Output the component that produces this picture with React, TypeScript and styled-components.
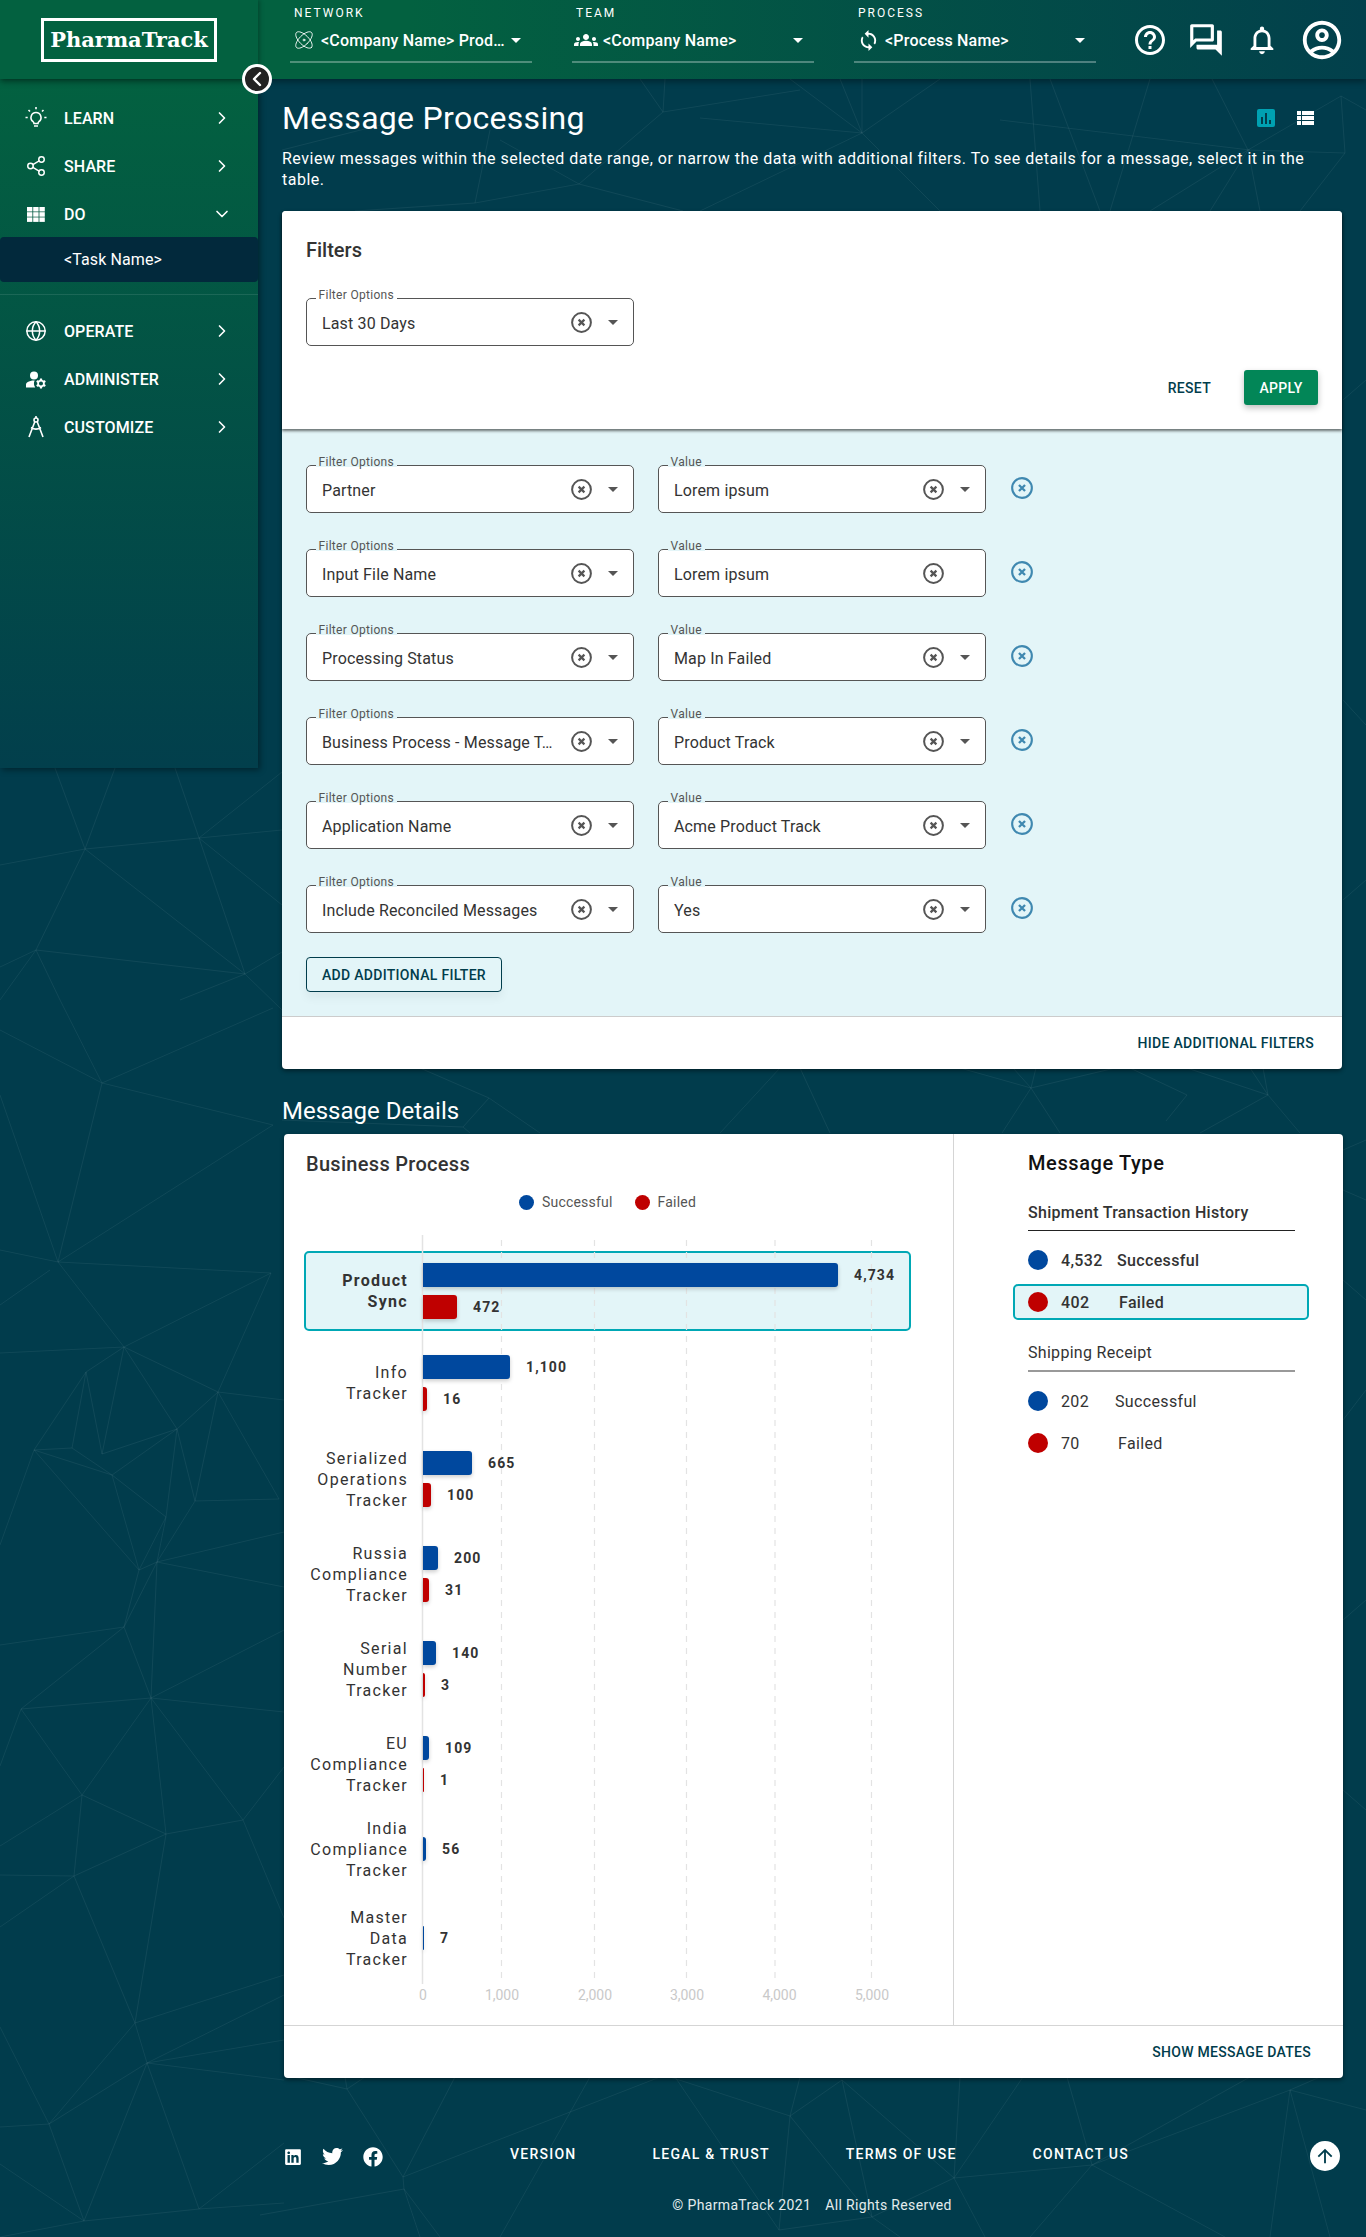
import React from 'react';
import styled, { createGlobalStyle } from 'styled-components';
import { ChevronDown, ChevronLeft, ChevronRight, Globe, Share2, Atom } from 'lucide-react';
import {
  MdArrowUpward,
  MdGroups,
  MdHelpOutline,
  MdManageAccounts,
  MdNotificationsNone,
  MdOutlineAccountCircle,
  MdOutlineForum,
  MdSync,
} from 'react-icons/md';
import { FaFacebook, FaLinkedin, FaTwitter } from 'react-icons/fa';

const colors = {
  page: '#013c4c',
  green: '#036140',
  teal: '#013d4c',
  cyan: '#00a8b5',
  tint: '#e3f5f8',
  blue: '#00489e',
  red: '#bf0000',
  text: '#333333',
  control: '#555555',
};

const GlobalStyle = createGlobalStyle`
  * {
    box-sizing: border-box;
  }

  body {
    margin: 0;
    background: ${colors.page};
    font-family: Roboto, "Liberation Sans", sans-serif;
    color: ${colors.text};
  }
`;

const Page = styled.div`
  position: relative;
  width: 1366px;
  min-height: 2237px;
  overflow: hidden;
  background: ${colors.page};
`;

const MeshSvg = styled.svg`
  position: absolute;
  top: 0;
  left: 0;
`;

/* ---------- header ---------- */

const Header = styled.header`
  position: relative;
  z-index: 3;
  display: flex;
  height: 79px;
  background: linear-gradient(90deg, ${colors.green} 0%, ${colors.green} 30%, #02404c 100%);
  box-shadow: 0 3px 6px rgba(0, 0, 0, 0.35);
  color: #ffffff;
`;

const LogoArea = styled.div`
  position: relative;
  display: flex;
  align-items: center;
  justify-content: center;
  width: 258px;
  flex-shrink: 0;
  background: ${colors.green};
  box-shadow: 2px 0 4px rgba(0, 0, 0, 0.25);
`;

const Logo = styled.div`
  display: flex;
  align-items: center;
  justify-content: center;
  width: 176px;
  height: 44px;
  border: 3px solid #ffffff;
  font-family: "DejaVu Serif", "Liberation Serif", serif;
  font-size: 21px;
  font-weight: 700;
`;

const CollapseButton = styled.button`
  position: absolute;
  top: 64px;
  left: 242px;
  z-index: 4;
  display: flex;
  align-items: center;
  justify-content: center;
  width: 30px;
  height: 30px;
  padding: 0;
  border: 3px solid #ffffff;
  border-radius: 50%;
  background: #222222;
  color: #ffffff;
`;

const Pickers = styled.div`
  display: flex;
  gap: 40px;
  margin-left: 32px;
`;

const Picker = styled.div`
  width: 242px;
  padding-top: 5px;
`;

const PickerLabel = styled.div`
  height: 16px;
  padding-left: 4px;
  font-size: 12px;
  line-height: 16px;
  letter-spacing: 2px;
`;

const PickerRow = styled.div`
  display: flex;
  align-items: center;
  height: 42px;
  padding: 0 11px 2px 2px;
  border-bottom: 2px solid rgba(255, 255, 255, 0.3);
`;

const PickerIcon = styled.span`
  display: flex;
  align-items: center;
  justify-content: center;
  width: 24px;
  margin-right: 5px;
`;

const PickerText = styled.span`
  flex: 1;
  padding-top: 1px;
  font-size: 16px;
  font-weight: 500;
  letter-spacing: 0.2px;
  white-space: nowrap;
`;

const Caret = styled.span<{ $color?: string; $hidden?: boolean }>`
  width: 0;
  height: 0;
  flex-shrink: 0;
  border-left: 5px solid transparent;
  border-right: 5px solid transparent;
  border-top: 5px solid ${({ $color }) => $color ?? colors.control};
  visibility: ${({ $hidden }) => ($hidden ? 'hidden' : 'visible')};
`;

const HeaderIcons = styled.div`
  display: flex;
  align-items: center;
  margin-left: auto;
  padding-right: 12px;
`;

const HeaderIcon = styled.span<{ $wide?: boolean }>`
  display: flex;
  align-items: center;
  justify-content: center;
  width: ${({ $wide }) => ($wide ? '64px' : '56px')};
`;

/* ---------- sidebar ---------- */

const Body = styled.div`
  position: relative;
  z-index: 1;
  display: flex;
  align-items: flex-start;
`;

const Sidebar = styled.nav`
  width: 258px;
  height: 689px;
  flex-shrink: 0;
  padding-top: 15px;
  background: linear-gradient(180deg, ${colors.green} 0%, #023f4c 100%);
  box-shadow: 2px 2px 6px rgba(0, 0, 0, 0.4);
  color: #ffffff;
`;

const NavItem = styled.div`
  display: flex;
  align-items: center;
  height: 48px;
  padding: 0 26px 0 24px;
  font-size: 16px;
  font-weight: 500;
  letter-spacing: 0.1px;
`;

const NavIcon = styled.span`
  display: flex;
  align-items: center;
  justify-content: center;
  width: 24px;
  margin-right: 16px;
`;

const NavLabel = styled.span`
  flex: 1;
`;

const NavChild = styled.div`
  display: flex;
  align-items: center;
  height: 45px;
  margin-top: -1px;
  padding-left: 64px;
  border-radius: 4px;
  background: #02293c;
  font-size: 16px;
  letter-spacing: 0.1px;
`;

const NavDivider = styled.div`
  height: 1px;
  margin: 12px 0;
  background: rgba(255, 255, 255, 0.1);
`;

/* ---------- main ---------- */

const Main = styled.main`
  width: 1108px;
  padding: 19px 24px 0;
  color: ${colors.text};
`;

const TitleRow = styled.div`
  display: flex;
  align-items: center;
  justify-content: space-between;
  height: 40px;
  padding-right: 28px;
`;

const PageTitle = styled.h1`
  margin: 0;
  font-size: 32px;
  font-weight: 400;
  line-height: 40px;
  letter-spacing: 0.3px;
  color: #ffffff;
`;

const ViewToggles = styled.div`
  display: flex;
  align-items: center;
  gap: 22px;
`;

const ChartToggle = styled.span`
  display: flex;
  align-items: flex-end;
  justify-content: center;
  gap: 2px;
  width: 18px;
  height: 18px;
  padding-bottom: 3px;
  border-radius: 2px;
  background: #00a1b2;
`;

const ChartToggleBar = styled.span<{ $height: number }>`
  width: 2px;
  height: ${({ $height }) => $height}px;
  background: ${colors.teal};
`;

const ListToggle = styled.span`
  display: grid;
  grid-template-columns: 4px 12px;
  grid-auto-rows: 4px;
  gap: 1px;
`;

const ListToggleCell = styled.span`
  background: #ffffff;
`;

const Description = styled.p`
  margin: 10px 0 21px;
  font-size: 16px;
  line-height: 21px;
  letter-spacing: 0.5px;
  color: #ffffff;
`;

const Card = styled.section<{ $offset?: number; $bleed?: number }>`
  margin-left: ${({ $offset }) => $offset ?? 0}px;
  margin-right: ${({ $bleed }) => $bleed ?? 0}px;
  border-radius: 4px;
  background: #ffffff;
  box-shadow: 0 2px 4px rgba(0, 0, 0, 0.45);
`;

const FilterTop = styled.div`
  position: relative;
  z-index: 1;
  padding: 27px 24px 24px 24px;
  border-radius: 4px 4px 0 0;
  background: #ffffff;
  box-shadow: 0 2px 3px rgba(0, 0, 0, 0.55);
`;

const CardTitle = styled.h2<{ $inset?: number; $spacing?: number }>`
  margin: 0 0 0 ${({ $inset }) => $inset ?? 0}px;
  font-size: 20px;
  font-weight: 500;
  line-height: 24px;
  letter-spacing: ${({ $spacing }) => $spacing ?? 0}px;
  color: ${colors.text};
`;

const Actions = styled.div`
  display: flex;
  align-items: center;
  justify-content: flex-end;
  gap: 33px;
  margin-top: 24px;
`;

const TextButton = styled.button`
  padding: 0;
  border: 0;
  background: none;
  font-family: inherit;
  font-size: 14px;
  font-weight: 500;
  letter-spacing: 0.3px;
  color: ${colors.teal};
`;

const ApplyButton = styled.button`
  width: 74px;
  height: 35px;
  padding: 0;
  border: 0;
  border-radius: 3px;
  background: #028657;
  box-shadow: 0 3px 6px rgba(0, 0, 0, 0.25);
  font-family: inherit;
  font-size: 14px;
  font-weight: 500;
  letter-spacing: 0.3px;
  color: #ffffff;
`;

const FilterList = styled.div`
  padding: 36px 24px 24px;
  border-bottom: 1px solid #cccccc;
  background: ${colors.tint};
`;

const FilterRow = styled.div`
  display: flex;
  align-items: center;
  gap: 24px;
  margin-bottom: 36px;
`;

const SelectBox = styled.div<{ $top?: number }>`
  position: relative;
  display: flex;
  align-items: center;
  gap: 16px;
  width: 328px;
  height: 48px;
  margin-top: ${({ $top }) => $top ?? 0}px;
  padding: 0 15px;
  border: 1.5px solid ${colors.control};
  border-radius: 5px;
  background: #ffffff;
`;

const SelectLabel = styled.label<{ $bg: string }>`
  position: absolute;
  top: -12.5px;
  left: 8.5px;
  padding: 0 3px;
  background: linear-gradient(180deg, ${({ $bg }) => $bg} 0 13px, #ffffff00 13px);
  font-size: 12px;
  line-height: 16px;
  letter-spacing: 0.3px;
  color: ${colors.control};
`;

const SelectValue = styled.span`
  flex: 1;
  padding-top: 3px;
  font-size: 16px;
  letter-spacing: 0.15px;
  white-space: nowrap;
  color: ${colors.text};
`;

const ClearSvg = styled.svg`
  flex-shrink: 0;
`;

const RemoveButton = styled.span`
  display: flex;
  margin-left: 1px;
  margin-top: -2px;
`;

const AddButton = styled.button`
  display: block;
  width: 196px;
  height: 35px;
  margin-top: -12px;
  padding: 0;
  border: 1.5px solid ${colors.teal};
  border-radius: 4px;
  background: transparent;
  box-shadow: 0 6px 10px rgba(0, 0, 0, 0.05);
  font-family: inherit;
  font-size: 14px;
  font-weight: 500;
  letter-spacing: 0.3px;
  color: ${colors.teal};
`;

const CardFooter = styled.div<{ $pad: number }>`
  display: flex;
  align-items: center;
  justify-content: flex-end;
  height: 52px;
  padding-right: ${({ $pad }) => $pad}px;
`;

const SectionTitle = styled.h2`
  margin: 26px 0 7px;
  font-size: 24px;
  font-weight: 400;
  line-height: 32px;
  color: #ffffff;
`;

const DetailsGrid = styled.div`
  display: grid;
  grid-template-columns: 669px 1fr;
  height: 892px;
  border-bottom: 1px solid #d5d5d5;
`;

const ChartPanel = styled.div`
  padding-top: 18px;
`;

const Legend = styled.div`
  display: flex;
  align-items: center;
  justify-content: center;
  gap: 22px;
  width: 607px;
  height: 20px;
  margin: 16px 0 23px 20px;
  font-size: 14px;
  letter-spacing: 0.2px;
  color: ${colors.control};
`;

const LegendItem = styled.span`
  display: flex;
  align-items: center;
  gap: 8px;
`;

const Dot = styled.span<{ $color: string; $size: number }>`
  width: ${({ $size }) => $size}px;
  height: ${({ $size }) => $size}px;
  flex-shrink: 0;
  border-radius: 50%;
  background: ${({ $color }) => $color};
`;

const Chart = styled.div`
  position: relative;
  width: 607px;
  margin-left: 20px;
  padding: 16px 0 14px;
`;

const GridSvg = styled.svg`
  position: absolute;
  top: 0;
  left: 0;
  z-index: 1;
`;

const ChartRow = styled.div<{ $top: number; $selected?: boolean }>`
  display: flex;
  align-items: center;
  height: ${({ $selected }) => ($selected ? 80 : 64)}px;
  margin-top: ${({ $top }) => $top}px;
  border: 2px solid ${({ $selected }) => ($selected ? colors.cyan : 'transparent')};
  border-radius: 5px;
  background: ${({ $selected }) => ($selected ? colors.tint : 'transparent')};
`;

const RowLabel = styled.div<{ $selected?: boolean }>`
  width: 102px;
  margin-right: 15px;
  flex-shrink: 0;
  text-align: right;
  white-space: pre-line;
  font-size: 16px;
  font-weight: ${({ $selected }) => ($selected ? 700 : 400)};
  line-height: 21px;
  letter-spacing: 1.3px;
  color: ${colors.text};
`;

const Bars = styled.div`
  position: relative;
  z-index: 2;
  display: flex;
  flex-direction: column;
  gap: 8px;
`;

const BarLine = styled.div`
  display: flex;
  align-items: center;
  gap: 16px;
  height: 24px;
`;

const Bar = styled.span<{ $color: string; $width: number }>`
  display: block;
  width: ${({ $width }) => $width}px;
  height: 24px;
  border-radius: 0 3px 3px 0;
  background: ${({ $color }) => $color};
  box-shadow: 0 2px 4px rgba(0, 0, 0, 0.2);
`;

const BarValue = styled.span`
  font-size: 14px;
  font-weight: 700;
  letter-spacing: 1.1px;
  color: ${colors.text};
`;

const TickRow = styled.div`
  position: relative;
  width: 607px;
  height: 22px;
  margin-left: 20px;
`;

const Tick = styled.span<{ $left: number }>`
  position: absolute;
  left: ${({ $left }) => $left}px;
  top: 0;
  transform: translateX(-50%);
  font-size: 14px;
  line-height: 22px;
  color: #c9c9c9;
`;

const TypePanel = styled.div`
  padding: 17px 0 0 74px;
  border-left: 1px solid #d5d5d5;
`;

const TypeTitle = styled.h2`
  margin: 0 0 28px;
  font-size: 20px;
  font-weight: 500;
  line-height: 24px;
  letter-spacing: 0.6px;
  color: #111111;
`;

const GroupTitle = styled.div<{ $active?: boolean; $top: number }>`
  width: 267px;
  margin-top: ${({ $top }) => $top}px;
  padding-bottom: 7px;
  border-bottom: ${({ $active }) => ($active ? '1px solid #222222' : '2px solid #999999')};
  font-size: 16px;
  font-weight: ${({ $active }) => ($active ? 500 : 400)};
  line-height: 20px;
  letter-spacing: 0.3px;
`;

const TypeRow = styled.div<{ $selected?: boolean; $top: number; $bold?: boolean }>`
  display: flex;
  align-items: center;
  width: 296px;
  height: 36px;
  margin: ${({ $top }) => $top}px 0 0 -15px;
  padding-left: 13px;
  border: 2px solid ${({ $selected }) => ($selected ? colors.cyan : 'transparent')};
  border-radius: 5px;
  background: ${({ $selected }) => ($selected ? colors.tint : 'transparent')};
  font-size: 16px;
  font-weight: ${({ $bold }) => ($bold ? 500 : 400)};
  letter-spacing: 0.35px;
`;

const TypeValue = styled.span<{ $width: number }>`
  width: ${({ $width }) => $width}px;
  margin-left: 13px;
`;

/* ---------- footer ---------- */

const Footer = styled.footer`
  color: #ffffff;
`;

const FooterRow = styled.div`
  display: flex;
  align-items: center;
  height: 30px;
  margin: 63px 0 0 2px;
  padding-right: 2px;
`;

const Socials = styled.div`
  display: flex;
  align-items: center;
  gap: 20px;
  width: 226px;
  padding-top: 1px;
`;

const FooterLinks = styled.div`
  display: flex;
  gap: 76px;
  padding-bottom: 4px;
  font-size: 14px;
  font-weight: 500;
  letter-spacing: 1.25px;
`;

const BackToTop = styled.span`
  display: flex;
  align-items: center;
  justify-content: center;
  width: 30px;
  height: 30px;
  margin-left: auto;
  border-radius: 50%;
  background: #ffffff;
  color: ${colors.teal};
`;

const Copyright = styled.div`
  display: flex;
  justify-content: center;
  gap: 14px;
  margin-top: 24px;
  font-size: 14px;
  line-height: 20px;
  letter-spacing: 0.35px;
  color: #e3ecee;
`;

/* ---------- drawings ---------- */

const CircleX = ({ color, size = 21 }: { color: string; size?: number }) => (
  <ClearSvg width={size} height={size} viewBox="0 0 21 21" fill="none">
    <circle cx="10.5" cy="10.5" r="9.4" stroke={color} strokeWidth="2" />
    <path d="M7.6 7.6l5.8 5.8M13.4 7.6l-5.8 5.8" stroke={color} strokeWidth="2.2" />
  </ClearSvg>
);

const BulbIcon = () => (
  <svg width="24" height="24" viewBox="0 0 24 24" fill="none" stroke="#fff" strokeWidth="1.6">
    <path d="M12 6.5a5 5 0 0 0-3 9c.7.6 1 1.2 1 2h4c0-.8.3-1.4 1-2a5 5 0 0 0-3-9z" />
    <path d="M10 20h4M12 1v2.2M4.5 4l1.5 1.5M19.5 4 18 5.500M1.500 11.500h2.200M20.300 11.500h2.200" />
  </svg>
);

const GridIcon = () => (
  <svg width="18" height="15" viewBox="0 0 18 15" fill="#fff">
    {[0, 6.2, 12.4].map((x) =>
      [0, 5.2, 10.4].map((y) => <rect key={`${x}-${y}`} x={x} y={y} width="5.400" height="4.500" />),
    )}
  </svg>
);

const CompassIcon = () => (
  <svg width="24" height="24" viewBox="0 0 24 24" fill="none" stroke="#fff" strokeWidth="1.6">
    <circle cx="12" cy="5" r="2" />
    <path d="M12 1v2M10.800 6.800 5 22M13.200 6.800 19 22M7 12.500c3 2 7 2 10 0" />
  </svg>
);

const meshLines: number[][] = [
  // left column
  [0, 1030, 102, 1083], [60, 1000, 102, 1083], [102, 1083, 273, 1008], [102, 1083, 273, 1125], [102, 1083, 58, 1262],
  [0, 1095, 58, 1262], [58, 1262, 273, 1125], [58, 1262, 271, 1273], [0, 1250, 58, 1262], [0, 1305, 50, 1270],
  [58, 1262, 124, 1347], [0, 1353, 124, 1347], [124, 1347, 271, 1273], [124, 1347, 218, 1392], [124, 1347, 86, 1372],
  [124, 1347, 177, 1429], [124, 1347, 102, 1454], [218, 1392, 284, 1400], [218, 1392, 177, 1429], [218, 1392, 195, 1501],
  [218, 1392, 279, 1499], [218, 1392, 271, 1273], [86, 1372, 34, 1450], [86, 1372, 72, 1448], [86, 1372, 102, 1454],
  [34, 1450, 72, 1448], [72, 1448, 112, 1475], [34, 1450, 112, 1475], [102, 1454, 177, 1429], [112, 1475, 177, 1429],
  [34, 1450, 0, 1545], [34, 1450, 139, 1570], [112, 1475, 166, 1517], [112, 1475, 139, 1570], [177, 1429, 166, 1517],
  [177, 1429, 195, 1501], [195, 1501, 279, 1499], [166, 1517, 139, 1570], [166, 1517, 157, 1562], [195, 1501, 157, 1562],
  [139, 1570, 157, 1562], [139, 1570, 124, 1627], [157, 1562, 124, 1627], [157, 1562, 284, 1532], [157, 1562, 284, 1587],
  [157, 1562, 151, 1698], [124, 1627, 151, 1698], [124, 1627, 0, 1645], [124, 1627, 21, 1709], [151, 1698, 21, 1709],
  [151, 1698, 284, 1712], [151, 1698, 284, 1630], [151, 1698, 82, 1795], [21, 1709, 82, 1795], [21, 1709, 0, 1766],
  [151, 1698, 166, 1834], [151, 1698, 243, 1820], [82, 1795, 166, 1834], [82, 1795, 74, 1876], [82, 1795, 0, 1846],
  [74, 1876, 166, 1834], [74, 1876, 0, 1875], [74, 1876, 0, 1927], [166, 1834, 243, 1820], [243, 1820, 284, 1767],
  [243, 1820, 284, 1918], [166, 1834, 135, 2023], [74, 1876, 135, 2023], [135, 2023, 284, 1975], [135, 2023, 147, 2063],
  [135, 2023, 49, 2124], [147, 2063, 49, 2124], [147, 2063, 284, 2040], [147, 2063, 284, 2080], [147, 2063, 284, 1995],
  [147, 2063, 84, 2221], [147, 2063, 199, 2209], [49, 2124, 84, 2221], [49, 2124, 0, 2127], [49, 2124, 0, 2027],
  [84, 2221, 199, 2209], [84, 2221, 0, 2237], [199, 2209, 284, 2203], [199, 2209, 284, 2143], [84, 2221, 0, 2164],
  // below the sidebar
  [85, 849, 55, 768], [85, 849, 115, 768], [85, 849, 0, 865], [85, 849, 199, 838], [199, 838, 175, 768],
  [199, 838, 282, 772], [199, 838, 282, 830], [85, 849, 36, 950], [85, 849, 245, 974], [199, 838, 245, 974],
  [199, 838, 282, 905], [36, 950, 245, 974], [36, 950, 0, 967], [245, 974, 282, 952], [245, 974, 282, 1010],
  [36, 950, 0, 1000], [36, 950, 60, 1000], [245, 974, 180, 1000],
  // top strip
  [579, 184, 475, 203], [475, 203, 490, 130], [475, 203, 355, 211], [579, 184, 683, 211], [579, 184, 500, 140],
  [663, 112, 665, 79], [663, 112, 640, 79], [663, 112, 579, 184], [663, 112, 800, 90], [282, 150, 400, 120],
  [862, 133, 790, 79], [862, 133, 840, 79], [862, 133, 862, 79], [862, 133, 940, 79], [862, 133, 700, 118],
  [862, 133, 940, 211], [862, 133, 700, 211], [1248, 150, 1341, 96], [1248, 150, 1345, 153], [1248, 150, 1212, 79],
  [1248, 150, 1150, 211], [1248, 150, 1260, 211], [1248, 150, 1210, 211], [1341, 96, 1366, 110], [1341, 96, 1345, 153],
  [1345, 153, 1300, 211], [1050, 79, 1100, 211], [1030, 79, 1040, 211], [1150, 79, 1110, 211], [1000, 120, 1250, 150],
  // between the cards
  [1031, 1088, 960, 1068], [1031, 1088, 1013, 1068], [1031, 1088, 1036, 1068], [1031, 1088, 1115, 1068], [1031, 1088, 1002, 1133],
  [1031, 1088, 1060, 1133], [1268, 1095, 1187, 1068], [1268, 1095, 1250, 1068], [1268, 1095, 1263, 1068], [1268, 1095, 1200, 1133],
  [1268, 1095, 1300, 1133], [1187, 1095, 1130, 1068], [1187, 1095, 1166, 1121], [489, 1098, 420, 1068], [489, 1098, 463, 1127],
  [489, 1098, 540, 1133], [463, 1127, 282, 1120], [463, 1127, 470, 1133], [780, 1068, 720, 1133], [800, 1068, 830, 1133],
  // footer
  [347, 2089, 284, 2075], [347, 2089, 345, 2077], [347, 2089, 365, 2077], [347, 2089, 403, 2177], [403, 2177, 404, 2189],
  [404, 2189, 260, 2215], [404, 2189, 440, 2237], [404, 2189, 420, 2237], [403, 2177, 660, 2077], [403, 2177, 455, 2077],
  [790, 2116, 670, 2077], [790, 2116, 842, 2080], [790, 2116, 800, 2077], [790, 2116, 872, 2217], [790, 2116, 779, 2230],
  [842, 2080, 954, 2178], [842, 2080, 872, 2217], [675, 2077, 779, 2230], [954, 2178, 1092, 2165], [954, 2178, 872, 2217],
  [954, 2178, 960, 2077], [954, 2178, 1023, 2077], [779, 2230, 872, 2217], [872, 2217, 900, 2237], [954, 2178, 985, 2237],
  [1092, 2165, 1290, 2090], [1092, 2165, 1067, 2077], [1092, 2165, 1225, 2237], [1092, 2165, 1030, 2237], [1290, 2090, 1366, 2110],
  [1290, 2090, 1270, 2237], [1290, 2090, 1330, 2237], [1290, 2090, 1320, 2077], [1092, 2165, 1250, 2077], [500, 2237, 590, 2077],
  [1366, 1140, 1343, 1150], [1343, 1190, 1366, 1200], [1343, 1280, 1366, 1300], [1343, 1420, 1366, 1390],
  [1343, 1620, 1366, 1600], [1343, 1790, 1366, 1810], [1343, 400, 1366, 380], [1343, 700, 1366, 725], [1343, 900, 1366, 880],
];

const Mesh = () => (
  <MeshSvg width="1366" height="2237" viewBox="0 0 1366 2237" stroke="#8fb0ba" strokeOpacity="0.14" strokeWidth="0.8">
    {meshLines.map(([x1, y1, x2, y2]) => (
      <line key={`${x1}-${y1}-${x2}-${y2}`} x1={x1} y1={y1} x2={x2} y2={y2} />
    ))}
  </MeshSvg>
);

/* ---------- data ---------- */

const filters = [
  { option: 'Partner', value: 'Lorem ipsum', caret: true },
  { option: 'Input File Name', value: 'Lorem ipsum', caret: false },
  { option: 'Processing Status', value: 'Map In Failed', caret: true },
  { option: 'Business Process - Message T…', value: 'Product Track', caret: true },
  { option: 'Application Name', value: 'Acme Product Track', caret: true },
  { option: 'Include Reconciled Messages', value: 'Yes', caret: true },
];

type ChartItem = {
  label: string;
  top: number;
  ok: [number, string];
  failed?: [number, string];
  selected?: boolean;
};

const chartItems: ChartItem[] = [
  { label: 'Product\nSync', top: 0, ok: [415, '4,734'], failed: [34, '472'], selected: true },
  { label: 'Info\nTracker', top: 20, ok: [87, '1,100'], failed: [4, '16'] },
  { label: 'Serialized\nOperations\nTracker', top: 32, ok: [49, '665'], failed: [8, '100'] },
  { label: 'Russia\nCompliance\nTracker', top: 31, ok: [15, '200'], failed: [6, '31'] },
  { label: 'Serial\nNumber\nTracker', top: 31, ok: [13, '140'], failed: [2, '3'] },
  { label: 'EU\nCompliance\nTracker', top: 31, ok: [6, '109'], failed: [1, '1'] },
  { label: 'India\nCompliance\nTracker', top: 21, ok: [3, '56'] },
  { label: 'Master\nData\nTracker', top: 25, ok: [1, '7'] },
];

const gridLines = [197.5, 290.5, 382.5, 471, 567.5];
const ticks: [number, string][] = [
  [119, '0'],
  [198, '1,000'],
  [291, '2,000'],
  [383, '3,000'],
  [475.5, '4,000'],
  [568, '5,000'],
];

const Select = ({ label, value, bg, caret = true }: { label: string; value: string; bg: string; caret?: boolean }) => (
  <SelectBox>
    <SelectLabel $bg={bg}>{label}</SelectLabel>
    <SelectValue>{value}</SelectValue>
    <CircleX color={colors.control} />
    <Caret $hidden={!caret} />
  </SelectBox>
);

const App = () => (
  <Page>
    <GlobalStyle />
    <Mesh />
    <Header>
      <LogoArea>
        <Logo>PharmaTrack</Logo>
        <CollapseButton type="button" aria-label="Collapse menu">
          <ChevronLeft size={24} strokeWidth={2.4} />
        </CollapseButton>
      </LogoArea>
      <Pickers>
        <Picker>
          <PickerLabel>NETWORK</PickerLabel>
          <PickerRow>
            <PickerIcon>
              <Atom size={22} strokeWidth={1} />
            </PickerIcon>
            <PickerText>{'<Company Name> Prod…'}</PickerText>
            <Caret $color="#ffffff" />
          </PickerRow>
        </Picker>
        <Picker>
          <PickerLabel>TEAM</PickerLabel>
          <PickerRow>
            <PickerIcon>
              <MdGroups size={24} />
            </PickerIcon>
            <PickerText>{'<Company Name>'}</PickerText>
            <Caret $color="#ffffff" />
          </PickerRow>
        </Picker>
        <Picker>
          <PickerLabel>PROCESS</PickerLabel>
          <PickerRow>
            <PickerIcon>
              <MdSync size={23} />
            </PickerIcon>
            <PickerText>{'<Process Name>'}</PickerText>
            <Caret $color="#ffffff" />
          </PickerRow>
        </Picker>
      </Pickers>
      <HeaderIcons>
        <HeaderIcon>
          <MdHelpOutline size={36} />
        </HeaderIcon>
        <HeaderIcon>
          <MdOutlineForum size={38} />
        </HeaderIcon>
        <HeaderIcon>
          <MdNotificationsNone size={34} />
        </HeaderIcon>
        <HeaderIcon $wide>
          <MdOutlineAccountCircle size={46} />
        </HeaderIcon>
      </HeaderIcons>
    </Header>

    <Body>
      <Sidebar>
        <NavItem>
          <NavIcon><BulbIcon /></NavIcon>
          <NavLabel>LEARN</NavLabel>
          <ChevronRight size={20} />
        </NavItem>
        <NavItem>
          <NavIcon><Share2 size={22} strokeWidth={1.6} /></NavIcon>
          <NavLabel>SHARE</NavLabel>
          <ChevronRight size={20} />
        </NavItem>
        <NavItem>
          <NavIcon><GridIcon /></NavIcon>
          <NavLabel>DO</NavLabel>
          <ChevronDown size={20} />
        </NavItem>
        <NavChild>{'<Task Name>'}</NavChild>
        <NavDivider />
        <NavItem>
          <NavIcon><Globe size={22} strokeWidth={1.6} /></NavIcon>
          <NavLabel>OPERATE</NavLabel>
          <ChevronRight size={20} />
        </NavItem>
        <NavItem>
          <NavIcon><MdManageAccounts size={25} /></NavIcon>
          <NavLabel>ADMINISTER</NavLabel>
          <ChevronRight size={20} />
        </NavItem>
        <NavItem>
          <NavIcon><CompassIcon /></NavIcon>
          <NavLabel>CUSTOMIZE</NavLabel>
          <ChevronRight size={20} />
        </NavItem>
      </Sidebar>

      <Main>
        <TitleRow>
          <PageTitle>Message Processing</PageTitle>
          <ViewToggles>
            <ChartToggle>
              <ChartToggleBar $height={7} />
              <ChartToggleBar $height={11} />
              <ChartToggleBar $height={4} />
            </ChartToggle>
            <ListToggle>
              <ListToggleCell />
              <ListToggleCell />
              <ListToggleCell />
              <ListToggleCell />
              <ListToggleCell />
              <ListToggleCell />
            </ListToggle>
          </ViewToggles>
        </TitleRow>
        <Description>
          Review messages within the selected date range, or narrow the data with additional filters. To see details for a
          message, select it in the table.
        </Description>

        <Card>
          <FilterTop>
            <CardTitle>Filters</CardTitle>
            <SelectBox $top={36}>
              <SelectLabel $bg="#ffffff">Filter Options</SelectLabel>
              <SelectValue>Last 30 Days</SelectValue>
              <CircleX color={colors.control} />
              <Caret />
            </SelectBox>
            <Actions>
              <TextButton type="button">RESET</TextButton>
              <ApplyButton type="button">APPLY</ApplyButton>
            </Actions>
          </FilterTop>
          <FilterList>
            {filters.map((row) => (
              <FilterRow key={row.option}>
                <Select label="Filter Options" value={row.option} bg={colors.tint} />
                <Select label="Value" value={row.value} bg={colors.tint} caret={row.caret} />
                <RemoveButton>
                  <CircleX color="#3f88b0" size={22} />
                </RemoveButton>
              </FilterRow>
            ))}
            <AddButton type="button">ADD ADDITIONAL FILTER</AddButton>
          </FilterList>
          <CardFooter $pad={28}>
            <TextButton type="button">HIDE ADDITIONAL FILTERS</TextButton>
          </CardFooter>
        </Card>

        <SectionTitle>Message Details</SectionTitle>
        <Card $offset={2} $bleed={-1}>
          <DetailsGrid>
            <ChartPanel>
              <CardTitle $inset={22} $spacing={0.3}>Business Process</CardTitle>
              <Legend>
                <LegendItem>
                  <Dot $color={colors.blue} $size={15} />
                  Successful
                </LegendItem>
                <LegendItem>
                  <Dot $color={colors.red} $size={15} />
                  Failed
                </LegendItem>
              </Legend>
              <Chart>
                <GridSvg width="607" height="749" viewBox="0 0 607 749" fill="none">
                  <line x1="118.500" y1="0" x2="118.500" y2="749" stroke="#e3e3e3" strokeWidth="1.5" />
                  {gridLines.map((x) => (
                    <line key={x} x1={x} y1="5" x2={x} y2="749" stroke="#e3e3e3" strokeWidth="1.2" strokeDasharray="6 6" />
                  ))}
                </GridSvg>
                {chartItems.map((item) => (
                  <ChartRow key={item.label} $top={item.top} $selected={item.selected}>
                    <RowLabel $selected={item.selected}>{item.label}</RowLabel>
                    <Bars>
                      <BarLine>
                        <Bar $color={colors.blue} $width={item.ok[0]} />
                        <BarValue>{item.ok[1]}</BarValue>
                      </BarLine>
                      {item.failed ? (
                        <BarLine>
                          <Bar $color={colors.red} $width={item.failed[0]} />
                          <BarValue>{item.failed[1]}</BarValue>
                        </BarLine>
                      ) : null}
                    </Bars>
                  </ChartRow>
                ))}
              </Chart>
              <TickRow>
                {ticks.map(([left, text]) => (
                  <Tick key={text} $left={left}>
                    {text}
                  </Tick>
                ))}
              </TickRow>
            </ChartPanel>

            <TypePanel>
              <TypeTitle>Message Type</TypeTitle>
              <GroupTitle $active $top={0}>Shipment Transaction History</GroupTitle>
              <TypeRow $top={11} $bold>
                <Dot $color={colors.blue} $size={20} />
                <TypeValue $width={56}>4,532</TypeValue>
                Successful
              </TypeRow>
              <TypeRow $top={6} $bold $selected>
                <Dot $color={colors.red} $size={20} />
                <TypeValue $width={58}>402</TypeValue>
                Failed
              </TypeRow>
              <GroupTitle $top={23}>Shipping Receipt</GroupTitle>
              <TypeRow $top={11}>
                <Dot $color={colors.blue} $size={20} />
                <TypeValue $width={54}>202</TypeValue>
                Successful
              </TypeRow>
              <TypeRow $top={6}>
                <Dot $color={colors.red} $size={20} />
                <TypeValue $width={57}>70</TypeValue>
                Failed
              </TypeRow>
            </TypePanel>
          </DetailsGrid>
          <CardFooter $pad={32}>
            <TextButton type="button">SHOW MESSAGE DATES</TextButton>
          </CardFooter>
        </Card>

        <Footer>
          <FooterRow>
            <Socials>
              <FaLinkedin size={18} />
              <FaTwitter size={21} />
              <FaFacebook size={20} />
            </Socials>
            <FooterLinks>
              <span>VERSION</span>
              <span>LEGAL &amp; TRUST</span>
              <span>TERMS OF USE</span>
              <span>CONTACT US</span>
            </FooterLinks>
            <BackToTop>
              <MdArrowUpward size={22} />
            </BackToTop>
          </FooterRow>
          <Copyright>
            <span>© PharmaTrack 2021</span>
            <span>All Rights Reserved</span>
          </Copyright>
        </Footer>
      </Main>
    </Body>
  </Page>
);

export default App;
